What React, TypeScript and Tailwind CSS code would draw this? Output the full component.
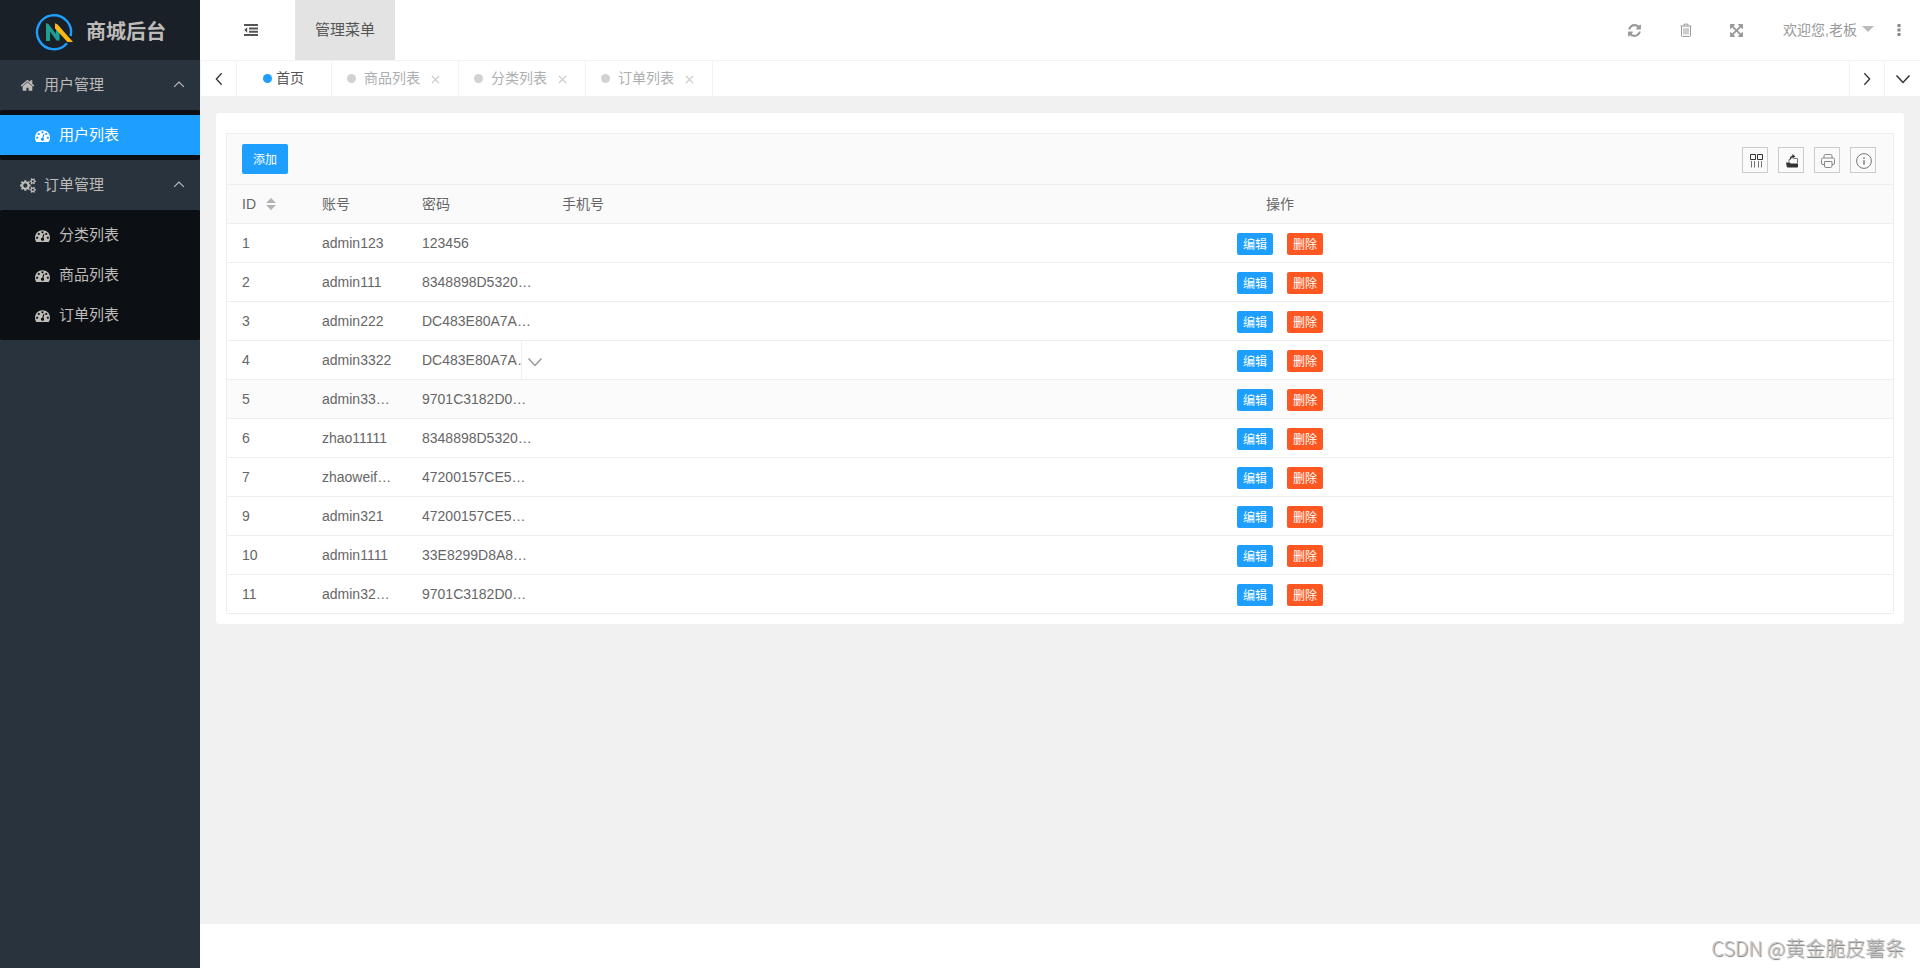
import type { ReactNode } from "react";

const FONT = "font-['Liberation_Sans','Noto_Sans_CJK_SC',sans-serif]";

const HOME =
  "M1472 992v480q0 26-19 45t-45 19h-384v-384h-256v384h-384q-26 0-45-19t-19-45v-480q0-1 .5-3t.5-3l575-474 575 474q1 2 1 6zm223-69l-62 74q-8 9-21 11h-3q-13 0-21-7l-692-577-692 577q-12 8-24 7-13-2-21-11l-62-74q-8-10-7-23.5t11-21.5l719-599q32-26 76-26t76 26l244 204v-195q0-14 9-23t23-9h192q14 0 23 9t9 23v408l219 182q10 8 11 21.5t-7 23.5z";
const GAUGE =
  "M384 1152q0-53-37.5-90.5t-90.5-37.5-90.5 37.5-37.5 90.5 37.5 90.5 90.5 37.5 90.5-37.5 37.5-90.5zm192-448q0-53-37.5-90.5t-90.5-37.5-90.5 37.5-37.5 90.5 37.5 90.5 90.5 37.5 90.5-37.5 37.5-90.5zm428 481l101-382q6-26-7.5-48.5t-38.5-29.5-48 6.5-30 39.5l-101 382q-60 5-107 43.5t-63 98.5q-20 77 20 146t117 89 146-20 89-117q16-60-6-117t-72-91zm660-33q0-53-37.5-90.5t-90.5-37.5-90.5 37.5-37.5 90.5 37.5 90.5 90.5 37.5 90.5-37.5 37.5-90.5zm-640-640q0-53-37.5-90.5t-90.5-37.5-90.5 37.5-37.5 90.5 37.5 90.5 90.5 37.5 90.5-37.5 37.5-90.5zm448 192q0-53-37.5-90.5t-90.5-37.5-90.5 37.5-37.5 90.5 37.5 90.5 90.5 37.5 90.5-37.5 37.5-90.5zm320 448q0 261-141 483-19 29-54 29h-1402q-35 0-54-29-141-221-141-483 0-182 71-348t191-286 286-191 348-71 348 71 286 191 191 286 71 348z";
const COGS =
  "M896 896q0-106-75-181t-181-75-181 75-75 181 75 181 181 75 181-75 75-181zm768 512q0-52-38-90t-90-38-90 38-38 90q0 53 37.5 90.5t90.5 37.5 90.5-37.5 37.5-90.5zm0-1024q0-52-38-90t-90-38-90 38-38 90q0 53 37.5 90.5t90.5 37.5 90.5-37.5 37.5-90.5zm-384 421v185q0 10-7 19.5t-16 10.5l-155 24q-11 35-32 76 34 48 90 115 7 11 7 20 0 12-7 19-23 30-82.5 89.5t-78.5 59.5q-11 0-21-7l-115-90q-37 19-77 31-11 108-23 155-7 24-30 24h-186q-11 0-20-7.5t-10-17.5l-23-153q-34-10-75-31l-118 89q-7 7-20 7-11 0-21-8-144-133-144-160 0-9 7-19 10-14 41-53t47-61q-23-44-35-82l-152-24q-10-1-17-9.5t-7-19.5v-185q0-10 7-19.5t16-10.5l155-24q11-35 32-76-34-48-90-115-7-11-7-20 0-12 7-20 22-30 82-89t79-59q11 0 21 7l115 90q34-18 77-32 11-108 23-154 7-24 30-24h186q11 0 20 7.5t10 17.5l23 153q34 10 75 31l118-89q8-7 20-7 11 0 21 8 144 133 144 160 0 8-7 19-12 16-42 54t-45 60q23 48 34 82l152 23q10 2 17 10.5t7 19.5zm640 533v140q0 16-149 31-12 27-30 52 51 113 51 138 0 4-4 7-122 71-124 71-8 0-46-47t-52-68q-20 2-30 2t-30-2q-14 21-52 68t-46 47q-2 0-124-71-4-3-4-7 0-25 51-138-18-25-30-52-149-15-149-31v-140q0-16 149-31 13-29 30-52-51-113-51-138 0-4 4-7 4-2 35-20t59-34 30-16q8 0 46 46.5t52 67.5q20-2 30-2t30 2q51-71 92-112l6-2q4 0 124 70 4 3 4 7 0 25-51 138 17 23 30 52 149 15 149 31zm0-1024v140q0 16-149 31-12 27-30 52 51 113 51 138 0 4-4 7-122 71-124 71-8 0-46-47t-52-68q-20 2-30 2t-30-2q-14 21-52 68t-46 47q-2 0-124-71-4-3-4-7 0-25 51-138-18-25-30-52-149-15-149-31v-140q0-16 149-31 13-29 30-52-51-113-51-138 0-4 4-7 4-2 35-20t59-34 30-16q8 0 46 46.5t52 67.5q20-2 30-2t30 2q51-71 92-112l6-2q4 0 124 70 4 3 4 7 0 25-51 138 17 23 30 52 149 15 149 31z";
const REFRESH =
  "M1639 1056q0 5-1 7-64 268-268 434.5t-478 166.5q-146 0-282.5-55t-243.5-157l-129 129q-19 19-45 19t-45-19-19-45v-448q0-26 19-45t45-19h448q26 0 45 19t19 45-19 45l-137 137q71 66 161 102t187 36q134 0 250-65t186-179q11-17 53-117 8-23 30-23h192q13 0 22.5 9.5t9.5 22.5zm25-800v448q0 26-19 45t-45 19h-448q-26 0-45-19t-19-45 19-45l138-138q-148-137-349-137-134 0-250 65t-186 179q-11 17-53 117-8 23-30 23h-199q-13 0-22.5-9.5t-9.5-22.5v-7q65-268 270-434.5t480-166.5q146 0 284 55.5t245 156.5l130-129q19-19 45-19t45 19 19 45z";
const EXPAND =
  "M1411 541l-355 355 355 355 144-144q29-31 70-14 39 17 39 59v448q0 26-19 45t-45 19h-448q-42 0-59-40-17-39 14-69l144-144-355-355-355 355 144 144q31 30 14 69-17 40-59 40h-448q-26 0-45-19t-19-45v-448q0-42 40-59 39-17 69 14l144 144 355-355-355-355-144 144q-19 19-45 19-12 0-24-5-40-17-40-59v-448q0-26 19-45t45-19h448q42 0 59 40 17 39-14 69l-144 144 355 355 355-355-144-144q-31-30-14-69 17-40 59-40h448q26 0 45 19t19 45v448q0 42-39 59-13 5-25 5-26 0-45-19z";

function Solid({ d, wide }: { d: string; wide?: boolean }) {
  return (
    <svg
      viewBox={wide ? "0 0 1920 1792" : "0 0 1792 1792"}
      className={wide ? "h-[15px] w-4 shrink-0" : "size-[15px] shrink-0"}
      fill="currentColor"
      aria-hidden="true"
    >
      <path d={d} />
    </svg>
  );
}

function Chevron({ dir, className }: { dir: "up" | "down" | "left" | "right"; className: string }) {
  const paths = {
    up: "M1.5 10.5 8 4l6.5 6.5",
    down: "M1.5 4.5 8 11.5l6.5-7",
    left: "M11 1.5 5 8l6 6.5",
    right: "M5 1.5 11 8l-6 6.5",
  };
  return (
    <svg viewBox="0 0 16 16" className={className} fill="none" stroke="currentColor" aria-hidden="true">
      <path d={paths[dir]} strokeWidth="1.5" />
    </svg>
  );
}

function Logo() {
  return (
    <svg viewBox="0 0 38 38" className="size-[38px] shrink-0" fill="none" aria-hidden="true">
      <path d="M35.6 23A17 17 0 1 0 32 30.2" stroke="#1e9fff" strokeWidth="2.4" />
      <path d="M11 10v18h4V18.5l6.5 9.1H24.6V15.5L21 12.5v8.6L13.5 11z" fill="#1d9f94" />
      <path d="M20 10.2 22.6 11.5 38 29H32.4L20 15.2z" fill="#fdb813" />
    </svg>
  );
}

function Group({ icon, label, children }: { icon: ReactNode; label: string; children: ReactNode }) {
  return (
    <li>
      <button
        type="button"
        className="flex h-[50px] w-full items-center gap-2 bg-[#28333e] pr-[15px] pl-5 text-[15px] text-[#bfbbb9]"
      >
        <span className="flex w-4 items-center">{icon}</span>
        {label}
        <Chevron dir="up" className="ml-auto size-3" />
      </button>
      <ul className="rounded-[2px] bg-[#0c0f13] py-[5px]">{children}</ul>
    </li>
  );
}

function SubItem({ label, active }: { label: string; active?: boolean }) {
  return (
    <li>
      <a
        href="#"
        className={
          active
            ? "flex h-10 items-center gap-[9px] bg-[#1e9fff] pl-[35px] text-[15px] text-white"
            : "flex h-10 items-center gap-[9px] pl-[35px] text-[15px] text-[#bfbbb9]"
        }
      >
        <Solid d={GAUGE} />
        {label}
      </a>
    </li>
  );
}

function PageTab({ label }: { label: string }) {
  return (
    <li className="flex w-[127px] items-center border-r border-[#f2f2f2] pl-[15px] text-[14px] text-[#acafb1]">
      <span className="mr-2 size-[9px] rounded-full bg-[#d2d2d2]" />
      {label}
      <button type="button" aria-label="关闭" className="mt-[2px] ml-[11px] text-[#c6c6c6]">
        <svg viewBox="0 0 10 10" className="size-[9px]" fill="none" stroke="currentColor" strokeWidth="1.2">
          <path d="M1 1l8 8M9 1l-8 8" />
        </svg>
      </button>
    </li>
  );
}

function Tool({ label, children }: { label: string; children: ReactNode }) {
  return (
    <button
      type="button"
      aria-label={label}
      className="flex size-[26px] items-center justify-center border border-[#ccc] pt-[2px] pl-[2px] text-[#333]"
    >
      <svg viewBox="0 0 16 16" className="size-4 shrink-0" fill="none" stroke="currentColor">
        {children}
      </svg>
    </button>
  );
}

const rows = [
  { id: 1, account: "admin123", password: "123456" },
  { id: 2, account: "admin111", password: "8348898D5320…" },
  { id: 3, account: "admin222", password: "DC483E80A7A…" },
  { id: 4, account: "admin3322", password: "DC483E80A7A…", open: true },
  { id: 5, account: "admin33…", password: "9701C3182D0…", hover: true },
  { id: 6, account: "zhao11111", password: "8348898D5320…" },
  { id: 7, account: "zhaoweif…", password: "47200157CE5…" },
  { id: 9, account: "admin321", password: "47200157CE5…" },
  { id: 10, account: "admin1111", password: "33E8299D8A8…" },
  { id: 11, account: "admin32…", password: "9701C3182D0…" },
];

const CELL = "h-[39px] border-b border-[#eee] px-[15px] py-0 text-left font-normal whitespace-nowrap";

export default function App() {
  return (
    <div className={`flex min-h-screen bg-white text-[14px] text-[#666] ${FONT}`}>
      <aside className="w-[200px] shrink-0 bg-[#28333e]">
        <div className="flex h-[60px] items-center gap-[13px] bg-[#192027] pt-[3px] pl-[35px]">
          <Logo />
          <h1 className="text-[20px] font-bold whitespace-nowrap text-[#bfbbb9]">商城后台</h1>
        </div>
        <nav>
          <ul>
            <Group icon={<Solid d={HOME} />} label="用户管理">
              <SubItem label="用户列表" active />
            </Group>
            <Group icon={<Solid d={COGS} wide />} label="订单管理">
              <SubItem label="分类列表" />
              <SubItem label="商品列表" />
              <SubItem label="订单列表" />
            </Group>
          </ul>
        </nav>
      </aside>

      <div className="flex min-w-0 flex-1 flex-col">
        <header className="flex h-[61px] border-b border-[#f2f2f2]">
          <button type="button" aria-label="收起菜单" className="ml-[11px] flex w-20 items-center justify-center text-[#555]">
            <svg viewBox="0 0 14 12" className="h-3 w-[14px]" fill="currentColor">
              <path d="M0 0h14v2H0zM5 3.4h9v2H5zM5 6.8h9v2H5zM0 10h14v2H0zM3.2 3.2v5.6L.2 6z" />
            </svg>
          </button>
          <button type="button" className="ml-1 w-[100px] bg-[#e3e3e3] text-[15px] text-[#555]">
            管理菜单
          </button>
          <div className="ml-auto flex items-center text-[#999]">
            <button type="button" aria-label="刷新" className="flex w-[51px] justify-center">
              <Solid d={REFRESH} />
            </button>
            <button type="button" aria-label="清理" className="flex w-[51px] justify-center">
              <svg viewBox="0 0 12 14" className="h-[14px] w-3" fill="none" stroke="currentColor">
                <path d="M.5 3.1h11M4 3V1.2h4V3M1.5 3.3v9.2q0 .9.9.9h7.2q.9 0 .9-.9V3.3M4 5.2v6.2M6 5.2v6.2M8 5.2v6.2" />
              </svg>
            </button>
            <button type="button" aria-label="全屏" className="flex w-[51px] justify-center">
              <Solid d={EXPAND} />
            </button>
            <button type="button" className="ml-[21px] flex items-center gap-[5px] whitespace-nowrap">
              欢迎您,老板
              <svg viewBox="0 0 12 6" className="mb-[2px] h-[6px] w-3" fill="#bbb">
                <path d="M0 0h12L6 6z" />
              </svg>
            </button>
            <button type="button" aria-label="更多" className="mr-[19px] ml-[23px]">
              <svg viewBox="0 0 4 12" className="h-3 w-1" fill="#888">
                <path d="M.5 0h3v3h-3zM.5 4.5h3v3h-3zM.5 9h3v3h-3z" />
              </svg>
            </button>
          </div>
        </header>

        <div className="flex h-[35px] text-[#333]">
          <button type="button" aria-label="向左" className="flex w-[37px] items-center justify-center border-r border-l border-[#f2f2f2]">
            <Chevron dir="left" className="size-[14px]" />
          </button>
          <ul className="flex">
            <li className="flex w-[95px] items-center gap-1 border-r border-[#f2f2f2] pl-[26px] text-[#555]">
              <span className="size-[9px] rounded-full bg-[#1e9fff]" />
              首页
            </li>
            <PageTab label="商品列表" />
            <PageTab label="分类列表" />
            <PageTab label="订单列表" />
          </ul>
          <button type="button" aria-label="向右" className="ml-auto flex w-[35px] items-center justify-center border-l border-[#f2f2f2]">
            <Chevron dir="right" className="size-[14px]" />
          </button>
          <button type="button" aria-label="标签操作" className="flex w-9 items-center justify-center border-l border-[#f2f2f2]">
            <Chevron dir="down" className="size-4" />
          </button>
        </div>

        <main className="flex-1 bg-[#f1f1f1] px-4 pt-[17px]">
          <section className="rounded bg-white px-[10px] pt-5 pb-[10px]">
            <div className="border border-b-0 border-[#eee]">
              <div className="flex h-[51px] items-center border-b border-[#eee] bg-[#fafafa] pr-[17px] pl-[15px]">
                <button type="button" className="h-[30px] rounded-[2px] bg-[#1e9fff] px-[11px] pt-[2px] text-[12px] text-white">
                  添加
                </button>
                <div className="ml-auto flex gap-[10px] pt-px">
                  <Tool label="筛选列">
                    <path d="M2.5 1.5h5v5h-5zM9.5 1.5h5v5h-5z" />
                    <path d="M3.5 8v6.5M6.5 8v6.5M10.5 8v6.5M13.5 8v6.5" stroke="#777" />
                  </Tool>
                  <Tool label="导出">
                    <path d="M2 9.6h4l.6.8H14v3.4q0 .8-.8.8H3.6q-.6 0-.8-.8z" fill="#333" stroke="none" />
                    <path d="M9.5 5.5h4V10M5 9V6.5h1.5" stroke="#777" />
                    <path d="M6.4 6.2q.2-2.8 2.6-2.8" strokeWidth="1.4" />
                    <path d="M8.4 1 11.4 3.4 8.4 5.6z" fill="#333" stroke="none" />
                  </Tool>
                  <Tool label="打印">
                    <path
                      d="M4 5V3q0-1.5 1.5-1.5h5Q12 1.500 12 3v2M4 11.500H3Q1.500 11.500 1.500 10V6.500Q1.500 5 3 5h10q1.500 0 1.500 1.500V10q0 1.500-1.500 1.500h-1M4.500 8.500h7.500V13q0 1.500-1.500 1.500H6Q4.500 14.500 4.500 13z"
                      stroke="#888"
                    />
                  </Tool>
                  <Tool label="提示">
                    <circle cx="8" cy="8" r="7.4" stroke="#777" />
                    <path d="M8 4.2v1.8M8 7.2v4.6" stroke="#888" strokeWidth="1.6" />
                  </Tool>
                </div>
              </div>

              <table className="w-full table-fixed border-separate border-spacing-0">
                <colgroup>
                  <col className="w-20" />
                  <col className="w-[100px]" />
                  <col className="w-[140px]" />
                  <col className="w-[120px]" />
                  <col />
                </colgroup>
                <thead>
                  <tr className="bg-[#fafafa]">
                    <th className={CELL}>
                      <button type="button" className="flex items-center gap-[10px]">
                        ID
                        <svg viewBox="0 0 10 12" className="h-3 w-[10px]" fill="#b2b2b2">
                          <path d="M0 5h10L5 0zM0 7h10l-5 5z" />
                        </svg>
                      </button>
                    </th>
                    <th className={CELL}>账号</th>
                    <th className={CELL}>密码</th>
                    <th className={CELL}>手机号</th>
                    <th className="h-[39px] border-b border-[#eee] text-center font-normal">操作</th>
                  </tr>
                </thead>
                <tbody>
                  {rows.map((row) => (
                    <tr key={row.id} className={row.hover ? "bg-[#fbfbfb]" : ""}>
                      <td className={CELL}>{row.id}</td>
                      <td className={CELL}>{row.account}</td>
                      <td className={`${CELL} relative`}>
                        {row.password}
                        {row.open && (
                          <button
                            type="button"
                            aria-label="展开"
                            className="absolute top-0 right-0 flex h-[38px] w-[26px] items-center justify-center border-l border-[#eee] bg-white pt-1 text-[#999]"
                          >
                            <Chevron dir="down" className="size-4" />
                          </button>
                        )}
                      </td>
                      <td className={CELL} />
                      <td className="h-[39px] border-b border-[#eee] p-0">
                        <div className="flex justify-center gap-[14px] pt-[2px]">
                          <button type="button" className="h-[22px] w-9 rounded-[2px] bg-[#1e9fff] pt-[2px] text-[12px] text-white">
                            编辑
                          </button>
                          <button type="button" className="h-[22px] w-9 rounded-[2px] bg-[#ff5722] pt-[2px] text-[12px] text-white">
                            删除
                          </button>
                        </div>
                      </td>
                    </tr>
                  ))}
                </tbody>
              </table>
            </div>
          </section>
        </main>

        <footer className="flex h-11 items-center justify-end pt-1 pr-[15px] font-['Noto_Sans_CJK_SC',sans-serif] text-[20px] font-light whitespace-nowrap text-[#c4c4c4] [text-shadow:1px_1px_1px_#777]">
          CSDN @黄金脆皮薯条
        </footer>
      </div>
    </div>
  );
}
